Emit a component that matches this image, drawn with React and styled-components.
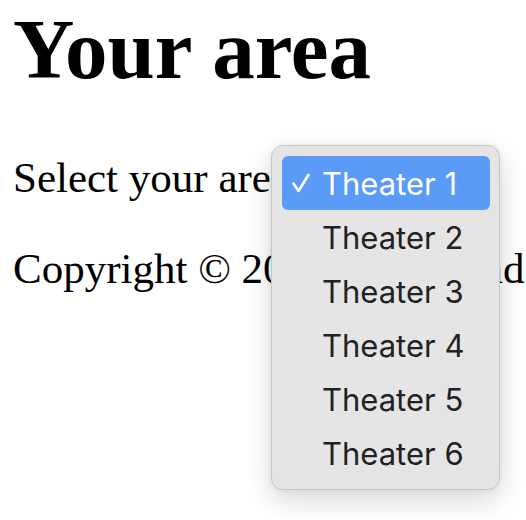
import React from "react";
import styled, { createGlobalStyle } from "styled-components";

const GlobalStyle = createGlobalStyle`
  html {
    overflow: hidden;
  }
  body {
    margin: 0;
    background: #fff;
    font-family: "Liberation Serif", "Times New Roman", serif;
    color: #000;
  }
`;

const Page = styled.div`
  position: relative;
  min-height: 520px;
  padding-left: 13px;
  white-space: nowrap;
  overflow: hidden;
`;

const Title = styled.h1`
  font-size: 85px;
  font-weight: bold;
  margin: 0 0 55px;
`;

const Line = styled.p`
  font-size: 43px;
  margin: 42px 0;
`;

const Menu = styled.div`
  position: absolute;
  left: 271px;
  top: 145px;
  width: 229px;
  box-sizing: border-box;
  padding: 10px 9px 9px 10px;
  background: #e5e5e5;
  border: 1px solid #c6c6c6;
  border-radius: 12px;
  box-shadow: 0 10px 28px rgba(0, 0, 0, 0.16), 0 0 6px rgba(0, 0, 0, 0.06);
  font-family: Inter, "Noto Sans", sans-serif;
`;

const Item = styled.div`
  display: flex;
  align-items: center;
  height: 54px;
  padding-left: 10px;
  border-radius: 6px;
  font-size: 31px;
  color: ${(props) => (props.$selected ? "#fff" : "#222")};
  background: ${(props) => (props.$selected ? "#599bf7" : "transparent")};
`;

const Check = styled.span`
  display: flex;
  align-items: center;
  width: 30px;
  height: 20px;
`;

const options = ["Theater 1", "Theater 2", "Theater 3", "Theater 4", "Theater 5", "Theater 6"];

function CheckMark() {
  return (
    <svg width="18" height="20" viewBox="0 0 18 20">
      <polyline points="1.5,10.5 6.5,18 16.5,1.8" fill="none" stroke="#fff" strokeWidth="2.6" strokeLinecap="round" strokeLinejoin="round" />
    </svg>
  );
}

export default function App() {
  const selected = "Theater 1";
  return (
    <>
      <GlobalStyle />
      <Page>
        <Title>Your area</Title>
        <Line>Select your area: Theater 1</Line>
        <Line>Copyright © 2024 Movieland</Line>
        <Menu>
          {options.map((opt) => (
            <Item key={opt} $selected={opt === selected}>
              <Check>{opt === selected && <CheckMark />}</Check>
              {opt}
            </Item>
          ))}
        </Menu>
      </Page>
    </>
  );
}
